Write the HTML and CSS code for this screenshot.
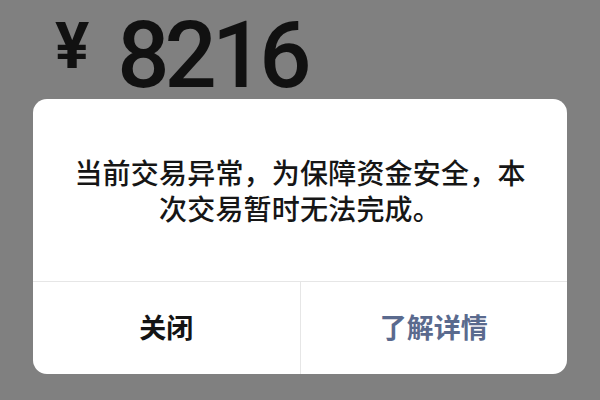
FILE: index.html
```html
<!DOCTYPE html>
<html lang="zh-CN">
<head>
<meta charset="utf-8">
<link rel="stylesheet" href="styles.css">
</head>
<body>
<div class="screen">
  <div class="amount">
    <span class="currency">¥</span>
    <span class="value">8216</span>
  </div>
  <div class="dialog">
    <div class="message">当前交易异常，为保障资金安全，本次交易暂时无法完成。</div>
    <div class="actions">
      <div class="btn btn-close">关闭</div>
      <div class="btn btn-more">了解详情</div>
    </div>
  </div>
</div>
</body>
</html>
```
FILE: styles.css
```css
html, body {
  margin: 0;
  padding: 0;
  background: #808080;
}
.screen {
  width: 600px;
  height: 400px;
  display: flex;
  flex-direction: column;
  font-family: "Noto Sans CJK SC", "Noto Sans", sans-serif;
}
.amount {
  display: flex;
  align-items: flex-start;
  padding: 10px 0 0 55px;
  height: 99px;
  flex-shrink: 0;
  box-sizing: border-box;
  color: #111;
  font-family: Roboto, "Liberation Sans", sans-serif;
}
.currency {
  font-size: 64px;
  font-weight: 700;
  line-height: 1;
  margin-top: 5px;
  margin-right: 28px;
}
.value {
  font-size: 92px;
  font-weight: 500;
  line-height: 1;
  letter-spacing: -5px;
}
.dialog {
  margin-left: 33px;
  width: 534px;
  height: 275px;
  flex-shrink: 0;
  background: #fff;
  border-radius: 14px;
  display: flex;
  flex-direction: column;
  overflow: hidden;
}
.message {
  height: 182px;
  box-sizing: border-box;
  padding: 0 30px;
  display: flex;
  align-items: center;
  justify-content: center;
  text-align: center;
  font-size: 28px;
  font-weight: 500;
  line-height: 36px;
  letter-spacing: 0.2px;
  color: #161616;
}
.actions {
  flex: 1;
  display: flex;
  border-top: 1px solid #e6e6e6;
}
.btn {
  flex: 1;
  display: flex;
  align-items: center;
  justify-content: center;
  font-size: 27px;
  font-weight: 700;
  padding-bottom: 4px;
}
.btn-close {
  color: #141414;
  border-right: 1px solid #e6e6e6;
}
.btn-more {
  color: #5a6a8e;
}
```
